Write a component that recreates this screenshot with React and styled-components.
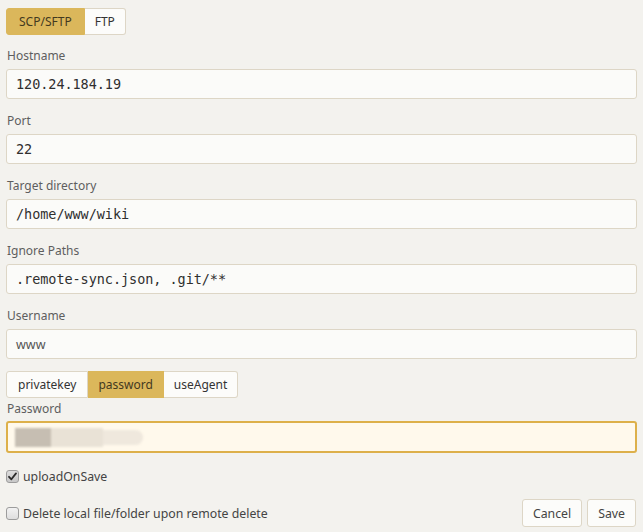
import React from 'react';
import styled, { createGlobalStyle } from 'styled-components';

const GlobalStyle = createGlobalStyle`
  html, body {
    margin: 0;
    padding: 0;
    background: #f3f2ee;
  }
  body {
    font-family: "Noto Sans", "Open Sans", sans-serif;
    font-size: 12px;
    color: #333;
  }
`;

const Page = styled.div`
  width: 643px;
  height: 532px;
  box-sizing: border-box;
  padding: 8px 6px 0 6px;
  display: flex;
  flex-direction: column;
`;

const BtnGroup = styled.div`
  display: inline-flex;
  align-self: flex-start;
  height: 27px;
  margin-top: ${(p) => p.top || 0}px;
`;

const GroupBtn = styled.button`
  height: 27px;
  padding: 0 ${(p) => p.pad || 10}px;
  font-family: inherit;
  font-size: 12px;
  color: ${(p) => (p.active ? '#43391f' : '#333')};
  background: ${(p) => (p.active ? '#dbb75b' : '#fcfcfa')};
  border: 1px solid ${(p) => (p.active ? '#dbb75b' : '#ddd6c6')};
  border-left-width: ${(p) => (p.first ? 1 : 0)}px;
  border-radius: 0;
  cursor: pointer;
  &:first-child { border-radius: 3px 0 0 3px; }
  &:last-child { border-radius: 0 3px 3px 0; }
`;

const Field = styled.div`
  display: flex;
  flex-direction: column;
  margin-top: ${(p) => p.top || 0}px;
`;

const Label = styled.label`
  height: 20px;
  line-height: 21px;
  margin-bottom: ${(p) => p.gap || 4}px;
  color: #5e5e5e;
  font-size: 12px;
  padding-left: 1px;
`;

const Input = styled.div`
  position: relative;
  height: 30px;
  box-sizing: border-box;
  display: flex;
  align-items: center;
  padding: 0 9px;
  background: #fbfbf9;
  border: 1px solid #ddd6c6;
  border-radius: 3px;
  font-family: ${(p) => (p.mono ? '"DejaVu Sans Mono", monospace' : 'inherit')};
  font-size: ${(p) => (p.mono ? '13.5px' : '12.5px')};
  color: ${(p) => (p.mono ? '#2f2f2f' : '#555')};
  letter-spacing: ${(p) => (p.mono ? '-0.05px' : '0')};
`;

const FocusInput = styled(Input)`
  height: 32px;
  background: #fff9ec;
  border: 2px solid #ddb04a;
`;

const Blur = styled.div`
  position: absolute;
  left: 7px;
  top: 5px;
  display: flex;
  height: 19px;
  filter: blur(1.2px);
`;

const BlurPart = styled.span`
  display: block;
  width: ${(p) => p.w}px;
  height: ${(p) => p.h || 19}px;
  margin-top: ${(p) => p.mt || 0}px;
  background: ${(p) => p.color};
  border-radius: ${(p) => p.r || '0'};
`;

const CheckRow = styled.label`
  display: flex;
  align-items: center;
  gap: 4px;
  height: 20px;
  font-size: 12.3px;
  color: #444;
`;

const Box = styled.span`
  width: 13px;
  height: 13px;
  box-sizing: border-box;
  border: 1px solid #9c9c9c;
  border-radius: 3px;
  background: ${(p) => (p.checked ? 'linear-gradient(#dcdcdc, #c8c8c8)' : 'linear-gradient(#f2f2f2, #dedede)')};
  display: flex;
  align-items: center;
  justify-content: center;
`;

const Footer = styled.div`
  display: flex;
  align-items: center;
  justify-content: space-between;
  margin-top: 13px;
  padding-right: 1px;
`;

const Actions = styled.div`
  display: flex;
  gap: 5px;
`;

const Button = styled.button`
  height: 28px;
  padding: 0 ${(p) => p.pad || 10}px;
  font-family: inherit;
  font-size: 12.3px;
  color: #444;
  background: #fcfcfa;
  border: 1px solid #ddd6c6;
  border-radius: 3px;
  cursor: pointer;
`;

const Check = ({ checked }) => (
  <Box checked={checked}>
    {checked && (
      <svg width="9" height="9" viewBox="0 0 9 9">
        <path d="M1 4.8 L3.4 7.3 L8 1.4" fill="none" stroke="#2a2a2a" strokeWidth="1.8" strokeLinecap="round" strokeLinejoin="round" />
      </svg>
    )}
  </Box>
);

const fields = [
  { label: 'Hostname', value: '120.24.184.19', mono: true },
  { label: 'Port', value: '22', mono: true },
  { label: 'Target directory', value: '/home/www/wiki', mono: true },
  { label: 'Ignore Paths', value: '.remote-sync.json, .git/**', mono: true },
  { label: 'Username', value: 'www', mono: false },
];

const App = () => (
  <Page>
    <GlobalStyle />
    <BtnGroup>
      <GroupBtn active first pad={12}>SCP/SFTP</GroupBtn>
      <GroupBtn pad={10}>FTP</GroupBtn>
    </BtnGroup>

    {fields.map((f, i) => (
      <Field key={f.label} top={i === 0 ? 10 : 11}>
        <Label>{f.label}</Label>
        <Input mono={f.mono}>{f.value}</Input>
      </Field>
    ))}

    <BtnGroup top={12}>
      <GroupBtn first pad={11}>privatekey</GroupBtn>
      <GroupBtn active pad={10}>password</GroupBtn>
      <GroupBtn pad={10}>useAgent</GroupBtn>
    </BtnGroup>

    <Field top={0}>
      <Label gap={3}>Password</Label>
      <FocusInput>
        <Blur>
          <BlurPart w={36} color="#c6beb2" />
          <BlurPart w={52} color="#e9e2d6" />
          <BlurPart w={40} h={15} mt={2} color="#efe8dd" r="0 8px 8px 0" />
        </Blur>
      </FocusInput>
    </Field>

    <CheckRow style={{ marginTop: 13 }}>
      <Check checked />
      uploadOnSave
    </CheckRow>

    <Footer>
      <CheckRow>
        <Check />
        Delete local file/folder upon remote delete
      </CheckRow>
      <Actions>
        <Button pad={10}>Cancel</Button>
        <Button pad={10}>Save</Button>
      </Actions>
    </Footer>
  </Page>
);

export default App;
